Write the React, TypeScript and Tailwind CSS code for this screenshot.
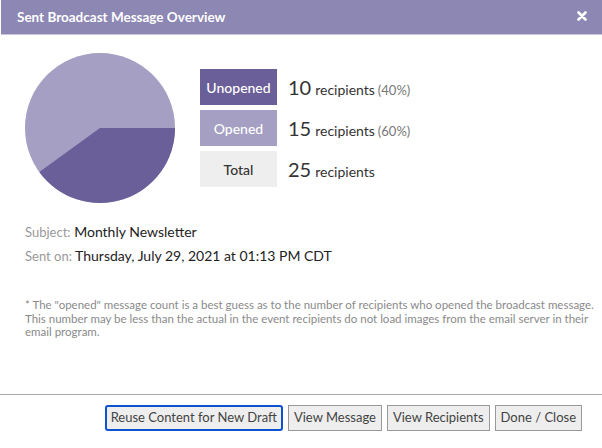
import React from "react";

function Pie() {
  // 40% unopened slice starting at 3 o'clock, clockwise
  const r = 75;
  const a = (144 * Math.PI) / 180;
  const x = 75 + r * Math.cos(a);
  const y = 75 + r * Math.sin(a);
  return (
    <svg width="150" height="150" viewBox="0 0 150 150">
      <circle cx="75" cy="75" r="75" fill="#a59fc4" />
      <path d={`M75 75 L150 75 A75 75 0 0 1 ${x} ${y} Z`} fill="#6a5f99" />
    </svg>
  );
}

const rows = [
  { label: "Unopened", count: 10, pct: "(40%)", box: "bg-[#6a5f99] text-white" },
  { label: "Opened", count: 15, pct: "(60%)", box: "bg-[#a59fc4] text-white" },
  { label: "Total", count: 25, pct: "", box: "bg-[#eeeeee] text-[#333]" },
];

export default function App() {
  return (
    <div className="w-[602px] h-[448px] bg-white flex flex-col font-['Lato','Liberation_Sans',sans-serif]">
      <div className="h-[35px] ml-px bg-[#8d87b4] border-b border-[#c9c6d9] flex items-center justify-between pl-[16px] pr-[15px]">
        <span className="text-white text-[13.5px] font-bold">Sent Broadcast Message Overview</span>
        <svg width="10" height="10" viewBox="0 0 10 10" className="mb-[2px]">
          <path d="M1.5 1.5 L8.5 8.5 M8.5 1.5 L1.5 8.5" stroke="white" strokeWidth="2.6" strokeLinecap="round" />
        </svg>
      </div>

      <div className="flex-1 pl-[25px] pr-[5px]">
        <div className="flex mt-[18px]">
          <Pie />
          <div className="ml-[25px] mt-[16px] flex flex-col gap-[5px]">
            {rows.map((r) => (
              <div key={r.label} className="flex items-center">
                <div className={`w-[77px] h-[36px] flex items-center justify-center text-[14px] font-medium ${r.box}`}>
                  {r.label}
                </div>
                <div className="ml-[11px] flex items-baseline text-[#333]">
                  <span className="text-[20px] mr-[4px]">{r.count}</span>
                  <span className="text-[14px]">recipients</span>
                  {r.pct && <span className="text-[13px] text-[#777] ml-[3px]">{r.pct}</span>}
                </div>
              </div>
            ))}
          </div>
        </div>

        <div className="mt-[17px] text-[14px] leading-[23px]">
          <div>
            <span className="text-[#999] text-[13px]">Subject:</span>{" "}
            <span className="text-[#222]">Monthly Newsletter</span>
          </div>
          <div>
            <span className="text-[#999] text-[13px]">Sent on:</span>{" "}
            <span className="text-[#222]">Thursday, July 29, 2021 at 01:13 PM CDT</span>
          </div>
        </div>

        <p className="mt-[30px] text-[11.5px] leading-[13.5px] text-[#8a8a8a]">
          * The "opened" message count is a best guess as to the number of recipients who opened the broadcast message.
          This number may be less than the actual in the event recipients do not load images from the email server in their
          email program.
        </p>
      </div>

      <div className="border-t border-[#aaa] h-[54px] flex items-start justify-end pr-[20px] pt-[10px] gap-[5px]">
        <button className="h-[26px] px-[4px] text-[13px] text-[#444] bg-[#eee] border-2 border-[#0c53d0] rounded-[3px]">
          Reuse Content for New Draft
        </button>
        <button className="h-[26px] px-[5px] text-[13px] text-[#444] bg-[#eee] border border-[#999]">
          View Message
        </button>
        <button className="h-[26px] px-[5px] text-[13px] text-[#444] bg-[#eee] border border-[#999]">
          View Recipients
        </button>
        <button className="h-[26px] px-[5px] text-[13px] text-[#444] bg-[#eee] border border-[#999]">
          Done / Close
        </button>
      </div>
    </div>
  );
}
